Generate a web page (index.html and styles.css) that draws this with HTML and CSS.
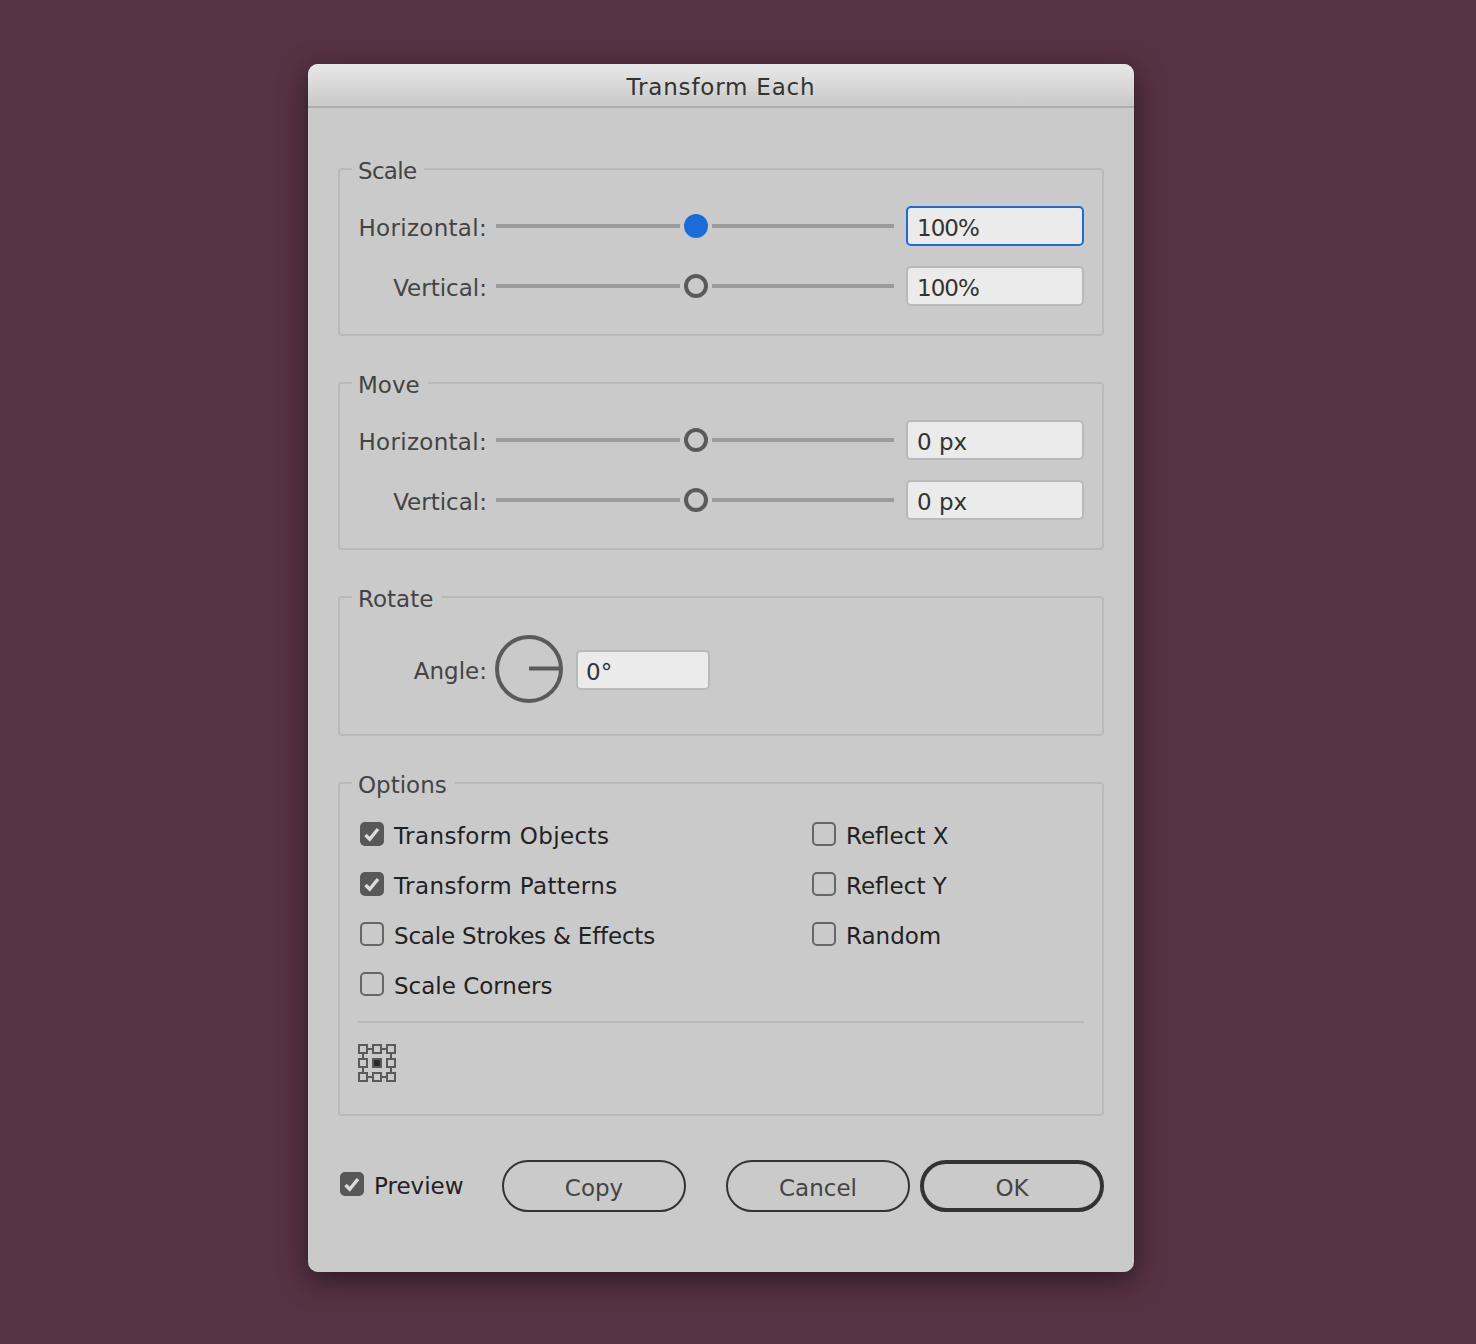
FILE: index.html
```html
<!DOCTYPE html>
<html lang="en">
<head>
    <meta charset="UTF-8">
    <title>Transform Each</title>
    <link rel="stylesheet" href="styles.css">
</head>
<body>
    <div class="dialog">
        <div class="titlebar">Transform Each</div>
        <form class="content">

            <fieldset class="group">
                <legend class="legend-tight">Scale</legend>
                <div class="sliders">
                    <div class="row">
                        <label class="row-label label-wide">Horizontal:</label>
                        <div class="slider"><span class="track track-left"></span><span class="thumb thumb-active"></span><span class="track track-right"></span></div>
                        <div class="field field-focus field-pct">100%</div>
                    </div>
                    <div class="row">
                        <label class="row-label">Vertical:</label>
                        <div class="slider"><span class="track track-left"></span><span class="thumb"></span><span class="track track-right"></span></div>
                        <div class="field field-pct">100%</div>
                    </div>
                </div>
            </fieldset>

            <fieldset class="group">
                <legend>Move</legend>
                <div class="sliders">
                    <div class="row">
                        <label class="row-label label-wide">Horizontal:</label>
                        <div class="slider"><span class="track track-left"></span><span class="thumb"></span><span class="track track-right"></span></div>
                        <div class="field">0 px</div>
                    </div>
                    <div class="row">
                        <label class="row-label">Vertical:</label>
                        <div class="slider"><span class="track track-left"></span><span class="thumb"></span><span class="track track-right"></span></div>
                        <div class="field">0 px</div>
                    </div>
                </div>
            </fieldset>

            <fieldset class="group">
                <legend>Rotate</legend>
                <div class="angle-row">
                    <label class="row-label">Angle:</label>
                    <svg class="dial" width="68" height="68" viewBox="0 0 68 68">
                        <circle cx="34" cy="34" r="32" fill="none" stroke="#5a5a5a" stroke-width="4"/>
                        <path d="M34 33.5H66" stroke="#5a5a5a" stroke-width="4"/>
                    </svg>
                    <div class="field field-angle">0°</div>
                </div>
            </fieldset>

            <fieldset class="group">
                <legend>Options</legend>
                <div class="options">
                    <div class="option option-wide"><span class="box box-checked"><svg width="24" height="24" viewBox="0 0 24 24"><path d="M5.5 13L9.7 17.2L18 7" fill="none" stroke="#dcdcdc" stroke-width="3.4"/></svg></span>Transform Objects</div>
                    <div class="option"><span class="box"></span>Reflect X</div>
                    <div class="option option-wide"><span class="box box-checked"><svg width="24" height="24" viewBox="0 0 24 24"><path d="M5.5 13L9.7 17.2L18 7" fill="none" stroke="#dcdcdc" stroke-width="3.4"/></svg></span>Transform Patterns</div>
                    <div class="option"><span class="box"></span>Reflect Y</div>
                    <div class="option option-tight"><span class="box"></span>Scale Strokes &amp; Effects</div>
                    <div class="option"><span class="box"></span>Random</div>
                    <div class="option"><span class="box"></span>Scale Corners</div>
                </div>
                <div class="divider"></div>
                <!-- reference point picker -->
                <svg class="anchor" width="38" height="38" viewBox="0 0 38 38">
                    <g fill="none" stroke="#5a5a5a" stroke-width="2">
                        <path d="M10 5H14M24 5H28M10 33H14M24 33H28M5 10V14M33 10V14M5 24V28M33 24V28"/>
                        <rect x="1" y="1" width="8" height="8"/>
                        <rect x="15" y="1" width="8" height="8"/>
                        <rect x="29" y="1" width="8" height="8"/>
                        <rect x="1" y="15" width="8" height="8"/>
                        <rect x="29" y="15" width="8" height="8"/>
                        <rect x="1" y="29" width="8" height="8"/>
                        <rect x="15" y="29" width="8" height="8"/>
                        <rect x="29" y="29" width="8" height="8"/>
                    </g>
                    <rect x="14" y="14" width="10" height="10" fill="#5a5a5a"/>
                    <rect x="16" y="16" width="6" height="6" fill="#2b2b2b"/>
                </svg>
            </fieldset>

            <div class="footer">
                <div class="option option-preview"><span class="box box-checked"><svg width="24" height="24" viewBox="0 0 24 24"><path d="M5.5 13L9.7 17.2L18 7" fill="none" stroke="#dcdcdc" stroke-width="3.4"/></svg></span>Preview</div>
                <button type="button" class="btn btn-copy">Copy</button>
                <button type="button" class="btn btn-cancel">Cancel</button>
                <button type="button" class="btn btn-ok">OK</button>
            </div>
        </form>
    </div>
</body>
</html>
```

FILE: styles.css
```css
* {
    box-sizing: border-box;
}

body {
    margin: 0;
    height: 1344px;
    overflow: hidden;
    padding-top: 64px;
    background-color: #573244;
    font-family: "DejaVu Sans", sans-serif;
    font-size: 23px;
    color: #444;
}

.dialog {
    width: 826px;
    height: 1208px;
    margin-left: 308px;
    background: #cacaca;
    border-radius: 10px;
    box-shadow: 0 8px 28px rgba(0, 0, 0, 0.5);
    overflow: hidden;
}

.titlebar {
    height: 44px;
    border-bottom: 2px solid #adadad;
    background: linear-gradient(#e8e8e8, #c9c9c9);
    text-align: center;
    line-height: 47px;
    letter-spacing: 0.8px;
    color: #333;
}

.content {
    padding: 45px 30px 0;
}

.group {
    margin: 0 0 31px;
    padding: 0 18px;
    border: 2px solid #b9b9b9;
    border-radius: 4px;
}

.group legend {
    height: 32px;
    margin-left: -6px;
    padding: 0 8px 0 6px;
    line-height: 36px;
}

.group .legend-tight {
    letter-spacing: -0.7px;
}

.sliders {
    padding: 21px 0 28px;
}

.row {
    display: grid;
    grid-template-columns: 130px 398px 178px;
    column-gap: 8px;
    align-items: center;
    height: 40px;
    margin-bottom: 20px;
}

.row:last-child {
    margin-bottom: 0;
}

.row-label {
    padding-top: 4px;
    padding-right: 1px;
    text-align: right;
}

.label-wide {
    letter-spacing: 0.3px;
}

.slider {
    display: flex;
    align-items: center;
}

.track {
    height: 4px;
    background: #9b9b9b;
}

.track-left {
    width: 184px;
}

.track-right {
    flex: 1;
}

.thumb {
    width: 24px;
    height: 24px;
    margin: 0 4px;
    border: 4px solid #5a5a5a;
    border-radius: 50%;
}

.thumb-active {
    border-color: #1b6cd9;
    background: #1b6cd9;
}

.field {
    height: 40px;
    margin-left: 4px;
    width: 178px;
    padding-left: 9px;
    border: 2px solid #b9b9b9;
    border-radius: 5px;
    background: #ebebeb;
    line-height: 41px;
    color: #333;
}

.field-pct {
    letter-spacing: -1px;
}

.field-focus {
    border-color: #1b6cd9;
}

.angle-row {
    display: flex;
    align-items: center;
    padding: 22px 0 31px;
}

.angle-row .row-label {
    width: 130px;
}

.dial {
    margin-left: 7px;
}

.field-angle {
    width: 134px;
    margin-top: 2px;
    margin-left: 13px;
    padding-left: 8px;
}

.options {
    display: grid;
    grid-template-columns: 452px 1fr;
    grid-auto-rows: 50px;
    padding: 11px 0 0 2px;
}

.option {
    display: flex;
    align-items: center;
    padding-top: 2px;
    color: #222;
}

.option-wide {
    letter-spacing: 0.4px;
}

.option-tight {
    letter-spacing: -0.2px;
}

.box {
    flex: none;
    width: 24px;
    height: 24px;
    margin-right: 10px;
    margin-bottom: 4px;
    border: 2px solid #666;
    border-radius: 5px;
}

.box-checked {
    border: none;
    background: #585858;
}

.box svg {
    display: block;
}

.divider {
    height: 2px;
    margin-top: 11px;
    background: #b9b9b9;
}

.anchor {
    display: block;
    margin: 21px 0 32px;
}

.footer {
    display: flex;
    align-items: center;
    height: 52px;
    margin-top: 44px;
}

.option-preview {
    width: 164px;
    padding-top: 0;
    padding-left: 2px;
}

.btn {
    width: 184px;
    height: 52px;
    padding: 4px 0 0;
    border: 2px solid #333;
    border-radius: 26px;
    background: transparent;
    font-family: inherit;
    font-size: 23px;
    color: #444;
}

.btn-cancel {
    margin-left: 40px;
}

.btn-ok {
    margin-left: 10px;
    border-width: 4px;
}
```
